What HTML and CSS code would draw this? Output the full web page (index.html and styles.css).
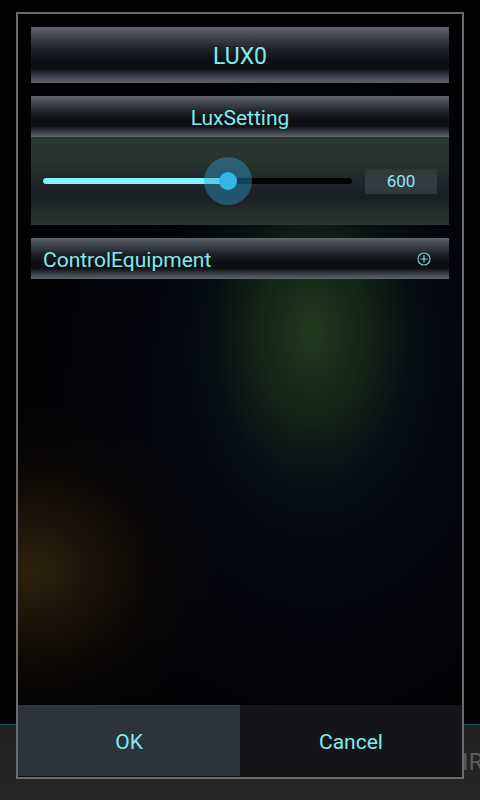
FILE: index.html
```html
<!DOCTYPE html>
<html>
<head>
<meta charset="utf-8">
<link rel="stylesheet" href="styles.css">
</head>
<body>
<div class="screen">
  <div class="backdrop-bar"><span class="backdrop-text">IR</span></div>
  <div class="dialog">
    <div class="content">
      <div class="bar title">LUX0</div>
      <div class="section">
        <div class="bar header">LuxSetting</div>
        <div class="slider-panel">
          <div class="slider">
            <div class="track">
              <div class="fill" style="width: 60%"></div>
              <div class="thumb" style="left: 60%"><span class="halo"></span><span class="knob"></span></div>
            </div>
          </div>
          <div class="value">600</div>
        </div>
      </div>
      <div class="bar group">
        <span>ControlEquipment</span>
        <svg class="plus" width="14" height="14" viewBox="0 0 14 14">
          <circle cx="7" cy="7" r="6" fill="none" stroke="#7fd3d9" stroke-width="1.1"/>
          <path d="M7 3.5V10.5M3.5 7H10.5" stroke="#7fd3d9" stroke-width="1.2"/>
        </svg>
      </div>
    </div>
    <div class="buttons">
      <div class="btn ok">OK</div>
      <div class="btn cancel">Cancel</div>
    </div>
  </div>
</div>
</body>
</html>
```

FILE: styles.css
```css
* { box-sizing: border-box; }
html, body { margin: 0; padding: 0; background: #000; }
body { font-family: Roboto, "Noto Sans", sans-serif; }

.screen {
  position: relative;
  width: 480px;
  height: 800px;
  background: #030303;
  padding: 12px 16px 21px 16px;
  overflow: hidden;
}

.backdrop-bar {
  position: absolute;
  left: 0; right: 0; bottom: 0;
  height: 76px;
  background: linear-gradient(#222 0%, #262626 100%);
  border-top: 1px solid #17545e;
  display: flex;
  align-items: center;
  padding-left: 462px;
  padding-bottom: 2px;
  overflow: hidden;
}
.backdrop-text {
  font-size: 24px;
  color: #5b5b5b;
  white-space: nowrap;
}

.dialog {
  position: relative;
  height: 100%;
  border: 2px solid #6a6a6a;
  display: flex;
  flex-direction: column;
  background:
    radial-gradient(ellipse 150px 230px at 294px 318px, rgba(33,58,28,1) 0%, rgba(22,44,24,0.8) 35%, rgba(10,24,22,0.45) 65%, rgba(6,12,16,0) 100%),
    radial-gradient(ellipse 190px 170px at 14px 556px, rgba(46,34,12,1) 0%, rgba(28,20,8,0.7) 40%, rgba(14,9,4,0.35) 70%, rgba(10,6,2,0) 100%),
    radial-gradient(ellipse 300px 380px at 300px 380px, rgba(6,12,24,0.95) 0%, rgba(4,6,16,0.6) 60%, rgba(2,3,8,0) 100%),
    #020204;
}

.content {
  flex: 1;
  padding: 13px 13px;
  display: flex;
  flex-direction: column;
  gap: 13px;
}

.bar {
  color: #82e9f1;
  background: linear-gradient(to bottom,
    #60656d 0%, #454a52 14%, #1d2026 40%, #0c0e12 62%, #0e1014 74%, #3c4149 88%, #5f646b 100%);
}

.title {
  height: 56px;
  display: flex;
  align-items: center;
  justify-content: center;
  font-size: 23px;
  padding-top: 2px;
}

.section { display: flex; flex-direction: column; }

.header {
  height: 41px;
  display: flex;
  align-items: center;
  justify-content: center;
  font-size: 21px;
  padding-top: 2px;
}

.slider-panel {
  height: 88px;
  display: flex;
  align-items: center;
  gap: 13px;
  padding: 0 12px;
  background: linear-gradient(to bottom,
    #2a3631 0%, #28332f 30%, #1e242a 55%, #1a1e25 68%, #222b29 82%, #2a3731 100%);
}

.slider { width: 309px; }

.track {
  position: relative;
  height: 6px;
  border-radius: 3px;
  background: #000;
}
.fill {
  height: 100%;
  border-radius: 3px;
  background: #80f5ff;
}
.thumb {
  position: absolute;
  top: 50%;
  width: 0; height: 0;
}
.halo {
  position: absolute;
  left: -24px; top: -24px;
  width: 48px; height: 48px;
  border-radius: 50%;
  background: rgba(46, 160, 210, 0.42);
}
.knob {
  position: absolute;
  left: -9px; top: -9px;
  width: 18px; height: 18px;
  border-radius: 50%;
  background: #36b6e6;
}

.value {
  width: 72px;
  height: 25px;
  display: flex;
  align-items: center;
  justify-content: center;
  font-size: 17px;
  color: #8ee6ee;
  background: linear-gradient(to bottom, #2e3a34 0%, #353b44 45%, #343a43 65%, #2d3a33 100%);
}

.group {
  height: 41px;
  display: flex;
  align-items: center;
  justify-content: space-between;
  padding: 2px 18px 0 12px;
  font-size: 21px;
}
.plus { display: block; margin-top: -2px; }

.buttons {
  height: 72px;
  display: flex;
  border-bottom: 1px solid #111;
}
.btn {
  flex: 1;
  display: flex;
  align-items: center;
  justify-content: center;
  font-size: 21px;
  color: #82e9f1;
  padding-top: 2px;
}
.ok { background: linear-gradient(135deg, #2b3239, #2c343b); }
.cancel { background: #141518; }
```
